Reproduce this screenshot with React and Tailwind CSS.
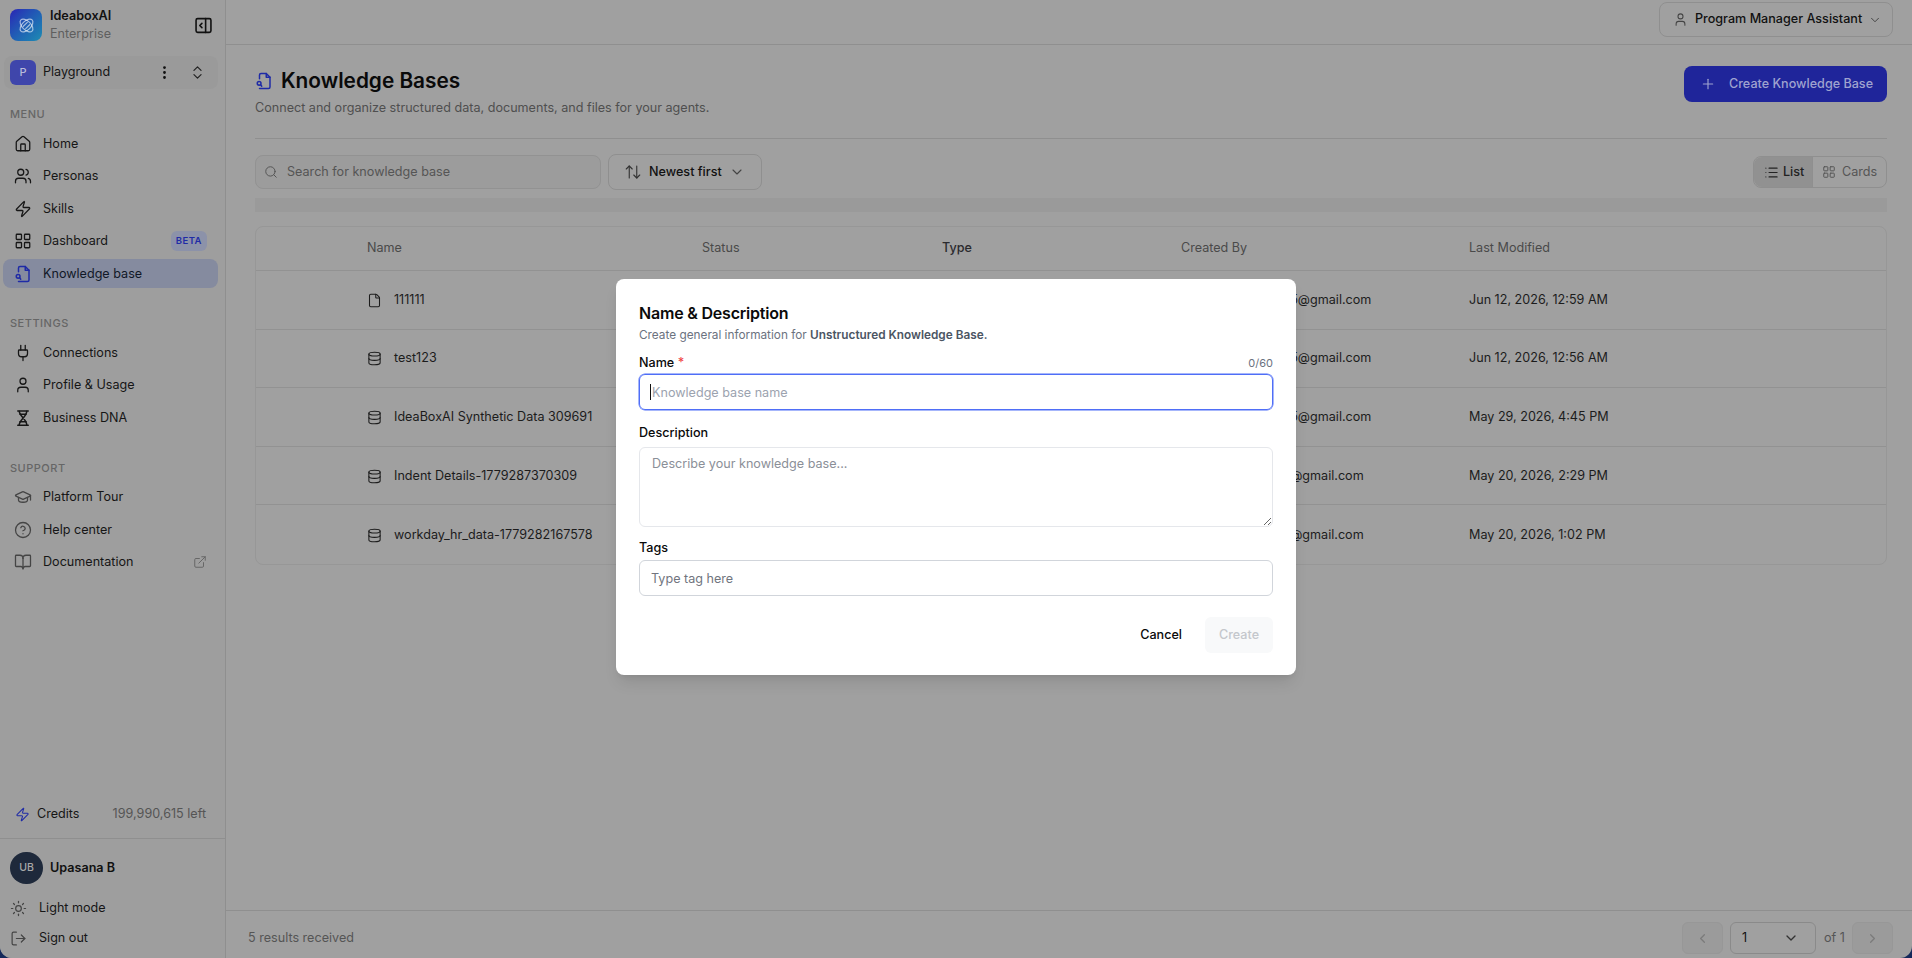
import React from "react";
import { Home, Users, Zap, LayoutGrid, Plug, User, GraduationCap, CircleHelp, BookOpen, ExternalLink, Sun, LogOut, EllipsisVertical, ChevronsUpDown, ChevronDown, ChevronLeft, ChevronRight, Search, ArrowUpDown, List, Plus, Database, File } from "lucide-react";

const FileSearchIcon = ({ className }) => (
  <svg viewBox="0 0 24 24" fill="none" stroke="currentColor" strokeWidth="2" strokeLinecap="round" strokeLinejoin="round" className={className}>
    <path d="M6 9V4a2 2 0 0 1 2-2h7l5 5v13a2 2 0 0 1-2 2H6" />
    <path d="M15 2v5h5" />
    <circle cx="5.5" cy="15" r="2.5" />
    <path d="m9 19-1.5-2" />
  </svg>
);

const DnaIcon = ({ className }) => (
  <svg viewBox="0 0 24 24" fill="none" stroke="currentColor" strokeWidth="2" strokeLinecap="round" strokeLinejoin="round" className={className}>
    <path d="M5 2.5h14M5 21.5h14" />
    <path d="M7 3c0 6 10 11 10 18M17 3c0 7-10 12-10 18" />
    <path d="M8 7h8M8 17h8" />
  </svg>
);

const Logo = () => (
  <div className="flex h-8 w-8 items-center justify-center rounded-lg bg-gradient-to-br from-[#2a1fb4] to-[#1f8cb2]">
    <svg viewBox="0 0 24 24" className="h-[19px] w-[19px] text-white/60" fill="none" stroke="currentColor" strokeWidth="1.5" strokeLinecap="round">
      <ellipse cx="12" cy="12" rx="10" ry="5.5" transform="rotate(-45 12 12)" />
      <ellipse cx="12" cy="12" rx="10" ry="5.5" transform="rotate(45 12 12)" />
      <path d="m8 13 5-5M11 16l5-5" />
    </svg>
  </div>
);

const PanelIcon = () => (
  <svg viewBox="0 0 16 16" className="h-[17px] w-[17px] text-[#111]" fill="none" stroke="currentColor" strokeWidth="1.5" strokeLinejoin="round" strokeLinecap="round">
    <rect x="1" y="1.5" width="14" height="13" rx="1.5" />
    <path d="M10 1.5v13M6.5 6 4.5 8l2 2" />
  </svg>
);

const Item = ({ icon: I, label, extra, active, muted }) => (
  <div className={`flex h-[29px] items-center rounded-lg pl-[11px] pr-[11px] text-[12.6px] leading-5 ${active ? "bg-[#858b9f] text-[#111827]" : "text-[#161616]"}`}>
    <I className={`mr-[11px] h-[18px] w-[18px] shrink-0 ${active ? "text-[#1f2ba6]" : muted ? "text-[#454545]" : "text-[#171717]"}`} strokeWidth={1.7} />
    <span className="flex-1 whitespace-nowrap">{label}</span>
    {extra}
  </div>
);

const Section = ({ title, children, className = "" }) => (
  <div className={className}>
    <div className="px-[7px] text-[11px] font-medium leading-[14px] tracking-[0.5px] text-[#666]">{title}</div>
    <div className="mt-[8px] flex flex-col gap-[3.5px]">{children}</div>
  </div>
);

const Row = ({ icon: I, name, email, date, border }) => (
  <div className={`flex h-[58.6px] items-center pt-px text-[12.6px] text-[#1c1c1c] ${border ? "border-b border-[#929292]" : ""}`}>
    <div className="flex w-[447px] items-center pl-[111px]">
      <I className="mr-[12px] h-[15px] w-[15px] shrink-0" strokeWidth={1.7} />
      <span className="whitespace-nowrap">{name}</span>
    </div>
    <div className="w-[478px]" />
    <div className="w-[288px] whitespace-nowrap">{email}</div>
    <div className="whitespace-nowrap">{date}</div>
  </div>
);

const rows = [
  [File, "111111", "upasana.bhattachi5@gmail.com", "Jun 12, 2026, 12:59 AM"],
  [Database, "test123", "upasana.bhattachi5@gmail.com", "Jun 12, 2026, 12:56 AM"],
  [Database, "IdeaBoxAI Synthetic Data 309691", "upasana.bhattachi5@gmail.com", "May 29, 2026, 4:45 PM"],
  [Database, "Indent Details-1779287370309", "upasana.bhattachi@gmail.com", "May 20, 2026, 2:29 PM"],
  [Database, "workday_hr_data-1779282167578", "upasana.bhattachi@gmail.com", "May 20, 2026, 1:02 PM"],
];

export default function App() {
  return (
    <div className="relative h-screen w-full overflow-hidden bg-[#14285a] font-['Inter',sans-serif]">
      <div className="flex h-full overflow-hidden rounded-b-xl bg-[#a0a0a0]">
        <aside className="flex w-[226px] shrink-0 flex-col border-r border-[#8f8f8f] bg-[#9e9e9e] pb-[5px]">
          <div className="flex h-[50px] items-center pl-[10px] pr-[13px]">
            <Logo />
            <div className="ml-2 flex-1 leading-[18px]">
              <div className="text-[12.6px] font-semibold text-[#111]">IdeaboxAI</div>
              <div className="text-[12.6px] text-[#5f5f5f]">Enterprise</div>
            </div>
            <PanelIcon />
          </div>
          <div className="ml-1 mr-[7px] mt-[6px] flex h-[33px] items-center rounded-lg bg-[#9a9a9a] pl-[6px] pr-[12px]">
            <div className="flex h-[25px] w-[26px] items-center justify-center rounded-md bg-[#3f46ab] text-[11px] font-medium text-[#b9bbd9]">P</div>
            <span className="ml-[7px] flex-1 text-[12.6px] text-[#161616]">Playground</span>
            <EllipsisVertical className="mr-[16px] h-[17px] w-[17px] text-[#111]" strokeWidth={2} />
            <ChevronsUpDown className="h-[17px] w-[17px] text-[#222]" strokeWidth={1.7} />
          </div>
          <div className="ml-[3px] mr-[7px] mt-[18px] flex flex-1 flex-col">
            <Section title="MENU">
              <Item icon={Home} label="Home" />
              <Item icon={Users} label="Personas" />
              <Item icon={Zap} label="Skills" />
              <Item icon={LayoutGrid} label="Dashboard" extra={<span className="rounded-md bg-[#8c92a9] px-[5px] py-[3px] text-[9.5px] font-semibold leading-[14px] tracking-[0.5px] text-[#1f2ba6]">BETA</span>} />
              <Item icon={FileSearchIcon} label="Knowledge base" active />
            </Section>
            <Section title="SETTINGS" className="mt-[28px]">
              <Item icon={Plug} label="Connections" />
              <Item icon={User} label="Profile & Usage" />
              <Item icon={DnaIcon} label="Business DNA" />
            </Section>
            <Section title="SUPPORT" className="mt-[28.5px]">
              <Item icon={GraduationCap} label="Platform Tour" muted />
              <Item icon={CircleHelp} label="Help center" muted />
              <Item icon={BookOpen} label="Documentation" muted extra={<ExternalLink className="h-[14px] w-[14px] text-[#666]" strokeWidth={1.7} />} />
            </Section>
          </div>
          <div className="flex h-[26px] items-center pl-[15px] pr-[19px] text-[12.6px]">
            <Zap className="mr-[7px] h-[15px] w-[15px] text-[#1f2ba6]" strokeWidth={1.7} />
            <span className="flex-1 text-[#161616]">Credits</span>
            <span className="text-[#555]">199,990,615 left</span>
          </div>
          <div className="mt-[11px] border-t border-[#8f8f8f] px-[10px] pt-[13px]">
            <div className="flex items-center">
              <div className="flex h-8 w-[33px] items-center justify-center rounded-full bg-[#1e293b] text-[10.5px] font-medium text-[#a8a8a8]">UB</div>
              <span className="ml-[7px] text-[12.6px] font-semibold text-[#111]">Upasana B</span>
            </div>
            <div className="mt-[9px] flex h-[30px] items-center text-[12.6px] text-[#161616]">
              <Sun className="mr-[12px] h-[17px] w-[17px] text-[#444]" strokeWidth={1.7} />Light mode
            </div>
            <div className="flex h-[30px] items-center text-[12.6px] text-[#161616]">
              <LogOut className="mr-[12px] h-[17px] w-[17px] text-[#444]" strokeWidth={1.7} />Sign out
            </div>
          </div>
        </aside>
        <main className="flex min-w-0 flex-1 flex-col">
          <div className="flex h-[45px] shrink-0 items-start justify-end border-b border-[#8f8f8f] pr-[19px] pt-[2px]">
            <div className="flex h-[35px] w-[234px] items-center rounded-lg border border-[#8f8f8f] pl-[13px] text-[12.6px] font-medium text-[#111]">
              <User className="mr-[7px] h-[15px] w-[15px] text-[#444]" strokeWidth={1.7} />
              <span className="flex-1 whitespace-nowrap">Program Manager Assistant</span>
              <ChevronDown className="mr-[10px] h-[14px] w-[14px] text-[#444]" strokeWidth={1.7} />
            </div>
          </div>
          <div className="flex-1 pl-[29px] pr-[25px]">
            <div className="flex h-[94px] items-start justify-between border-b border-[#8f8f8f] pt-[22px]">
              <div>
                <div className="flex items-center">
                  <FileSearchIcon className="mr-[8px] h-[18px] w-[18px] text-[#1f2ba6]" />
                  <h1 className="text-[20.8px] font-semibold leading-7 text-[#0a0a0a]">Knowledge Bases</h1>
                </div>
                <p className="mt-[3px] text-[12.6px] leading-5 text-[#4f4f4f]">Connect and organize structured data, documents, and files for your agents.</p>
              </div>
              <button className="-mt-px flex h-9 w-[203px] items-center rounded-lg bg-[#1f259a] pl-[16px] text-[12.6px] font-medium text-[#9fa3cf]">
                <Plus className="mr-[13px] h-[16px] w-[16px]" strokeWidth={1.7} />Create Knowledge Base
              </button>
            </div>
            <div className="mt-[15px] flex items-center">
              <div className="flex h-[34px] w-[346px] items-center rounded-lg border border-[#929292] bg-[#9c9c9c] pl-[8px] text-[12.6px] text-[#555]">
                <Search className="mr-[9px] h-[14px] w-[14px]" strokeWidth={1.7} />Search for knowledge base
              </div>
              <div className="ml-[7px] flex h-[36px] w-[154px] items-center rounded-lg border border-[#8f8f8f] pl-[15px] text-[12.6px] font-medium text-[#111]">
                <ArrowUpDown className="mr-[7px] h-[18px] w-[18px] text-[#333]" strokeWidth={1.5} />Newest first
                <ChevronDown className="ml-[7px] h-[16px] w-[16px] text-[#444]" strokeWidth={1.7} />
              </div>
              <div className="ml-auto flex h-[32px] w-[134px] items-center rounded-lg border border-[#8f8f8f] text-[12.6px]">
                <div className="flex h-full w-[59px] items-center rounded-l-lg border-r border-[#8f8f8f] bg-[#919191] pl-[10px] font-medium text-[#222]">
                  <List className="mr-[4px] h-[15px] w-[15px]" strokeWidth={1.7} />List
                </div>
                <div className="flex items-center pl-[9px] text-[#555]">
                  <LayoutGrid className="mr-[6px] h-[14px] w-[14px]" strokeWidth={1.7} />Cards
                </div>
              </div>
            </div>
            <div className="mt-[8px] h-[14px] bg-[#9a9a9a]" />
            <div className="mt-[14px] rounded-lg border border-[#979797]">
              <div className="flex h-[44px] items-center border-b border-[#929292] text-[12.6px] text-[#4a4a4a]">
                <div className="w-[446px] pl-[111px]">Name</div>
                <div className="w-[240px]">Status</div>
                <div className="w-[239px] font-medium text-[#2a2a2e]">Type</div>
                <div className="w-[288px]">Created By</div>
                <div>Last Modified</div>
              </div>
              {rows.map((r, i) => (
                <Row key={r[1]} icon={r[0]} name={r[1]} email={r[2]} date={r[3]} border={i < 4} />
              ))}
            </div>
          </div>
          <div className="flex h-[48px] shrink-0 items-start border-t border-[#8f8f8f] pl-[22px] pr-[19px] pt-[11px] text-[12.6px] text-[#555]">
            <span className="flex-1 leading-[32px]">5 results received</span>
            <div className="flex h-[32px] w-[41px] items-center justify-center rounded-md border border-[#979797] bg-[#9b9b9b]"><ChevronLeft className="h-[15px] w-[15px] text-[#7b7b7b]" /></div>
            <div className="ml-[7px] flex h-[32px] w-[86px] items-center rounded-md border border-[#8a8a8a] pl-[11px] text-[#111]">
              <span className="flex-1">1</span><ChevronDown className="mr-[16px] h-[16px] w-[16px] text-[#333]" />
            </div>
            <span className="w-[36px] pl-[8px] leading-[32px]">of 1</span>
            <div className="flex h-[32px] w-[41px] items-center justify-center rounded-md border border-[#979797] bg-[#9b9b9b]"><ChevronRight className="h-[15px] w-[15px] text-[#7b7b7b]" /></div>
          </div>
        </main>
      </div>

      <div className="absolute inset-0 flex items-start justify-center pt-[279px]">
        <div className="flex h-[396px] w-[680px] flex-col rounded-lg bg-white px-[23px] pt-[22px] shadow-lg">
          <h2 className="text-[16px] font-semibold leading-6 tracking-[-0.2px] text-[#0a0a0a]">Name &amp; Description</h2>
          <p className="text-[11.8px] leading-[20px] text-[#6b7280]">Create general information for <span className="font-semibold text-[#4b5563]">Unstructured Knowledge Base.</span></p>
          <div className="mt-[8px] flex items-center justify-between">
            <label className="text-[12.6px] font-medium leading-[20px] text-[#0a0a0a]">Name <span className="text-[#ef4444]">*</span></label>
            <span className="text-[11px] text-[#6b7280]">0/60</span>
          </div>
          <div className="relative mt-[1px]">
            <input placeholder="Knowledge base name" className="h-[36px] w-full rounded-md border border-[#4f6ef7] px-[12px] text-[12.6px] text-[#111] outline-none ring-[0.5px] ring-[#4f6ef7] placeholder:text-[#9ca3af]" />
            <span className="absolute left-[11px] top-[10px] h-[16px] w-px bg-[#111]" />
          </div>
          <label className="mt-[13px] text-[12.6px] font-medium leading-[20px] text-[#0a0a0a]">Description</label>
          <textarea placeholder="Describe your knowledge base..." className="mt-[4px] h-[80px] w-full rounded-md border border-[#e5e7eb] px-[12px] py-[6px] text-[12.6px] leading-[20px] outline-none placeholder:text-[#8b8f98]" />
          <label className="mt-[11px] text-[12.6px] font-medium leading-[20px] text-[#0a0a0a]">Tags</label>
          <input placeholder="Type tag here" className="mt-[2px] h-[36px] w-full rounded-md border border-[#d1d5db] px-[11px] text-[12.6px] outline-none placeholder:text-[#71757e]" />
          <div className="mt-[21px] flex items-center justify-end">
            <button className="mr-[23px] text-[12.6px] font-medium text-[#0a0a0a]">Cancel</button>
            <button className="h-9 w-[68px] rounded-md bg-[#f8f9fa] text-[12.6px] font-medium text-[#c4c7cc]">Create</button>
          </div>
        </div>
      </div>
    </div>
  );
}
